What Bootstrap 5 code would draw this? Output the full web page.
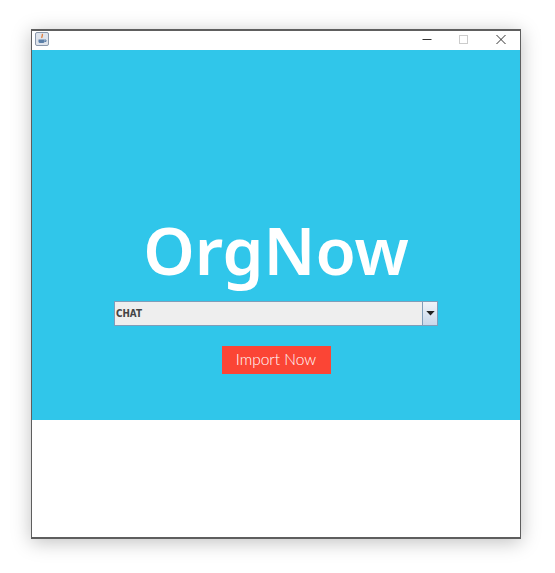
<!DOCTYPE html>
<html lang="en">
<head>
<meta charset="utf-8">
<title>OrgNow</title>
<link href="https://cdn.jsdelivr.net/npm/bootstrap@5.3.0/dist/css/bootstrap.min.css" rel="stylesheet">
<style>
html,body{height:100%;background:#fff;overflow:hidden}
.stage{padding:29px 34px 34px 31px;height:573px}
.appwin{height:510px;border:solid #5e5e5e;border-width:2px 1px;box-shadow:0 3px 18px rgba(0,0,0,.25);background:#fff}
.titlebar{height:19px;flex:none}
.appicon{width:14px;height:14px;margin:1px 0 0 3px}
.winbtns{width:111px;height:16px;margin-right:1px}
.winbtn{width:37px;height:16px}
.hero{height:370px;background:#30c6ea;flex:none;padding-top:165px}
.brand{font-family:"Noto Sans","Open Sans",sans-serif;font-weight:600;font-size:65.500px;line-height:70px;color:#fff;margin:0 0 16px}
.combo{width:324px;height:25px;border:1px solid #7f9db9;background:#eee}
.combotext{font-family:"DejaVu Sans",sans-serif;font-stretch:condensed;font-weight:700;font-size:9.800px;color:#444;padding-left:1px;line-height:23px}
.comboarrow{width:15px;border-left:1px solid #7f9db9;background:linear-gradient(#f0f3f8,#c9d8ea)}
.importbtn{width:109px;height:28px;margin-top:20px;background:#fb4535;color:#fff;font-family:Lato,sans-serif;font-weight:300;font-size:15.500px;line-height:24px;border:0;border-radius:0;padding:0 0 2px}
.importbtn:hover{background:#fb4535;color:#fff}
</style>
</head>
<body>
<div class="stage">
<div class="appwin d-flex flex-column">
  <div class="titlebar d-flex justify-content-between">
    <svg class="appicon" viewBox="0 0 14 14"><rect x=".5" y=".5" width="13" height="13" rx="1.500" fill="#dfe4ec" stroke="#8b98ab"/><path d="M7 2c1.500 1.500-1 2.500 0 4" fill="none" stroke="#e07b39" stroke-width="1.300"/><path d="M3.500 7.500h6v2.500a1.500 1.500 0 0 1-1.500 1h-3a1.500 1.500 0 0 1-1.500-1z" fill="#5b7fa8"/><path d="M9.500 8h1.500v1.500h-1.500" fill="none" stroke="#5b7fa8"/></svg>
    <div class="winbtns d-flex">
      <div class="winbtn d-flex align-items-center justify-content-center"><svg width="10" height="10" viewBox="0 0 10 10"><path d="M.5 5.500h9" stroke="#333" stroke-width="1"/></svg></div>
      <div class="winbtn d-flex align-items-center justify-content-center"><svg width="10" height="10" viewBox="0 0 10 10"><rect x=".5" y="1.500" width="8" height="8" fill="none" stroke="#ccc"/></svg></div>
      <div class="winbtn d-flex align-items-center justify-content-center"><svg width="10" height="10" viewBox="0 0 10 10"><path d="M.5 1l9 9M9.500 1l-9 9" stroke="#333" stroke-width="1"/></svg></div>
    </div>
  </div>
  <div class="hero d-flex flex-column align-items-center">
    <h1 class="brand">OrgNow</h1>
    <div class="combo d-flex">
      <div class="combotext flex-grow-1">CHAT</div>
      <div class="comboarrow d-flex align-items-center justify-content-center"><svg width="9" height="5" viewBox="0 0 10 6"><path d="M0 0h10L5 5.500z" fill="#222"/></svg></div>
    </div>
    <button type="button" class="btn importbtn">Import Now</button>
  </div>
</div>
</div>
</body>
</html>
